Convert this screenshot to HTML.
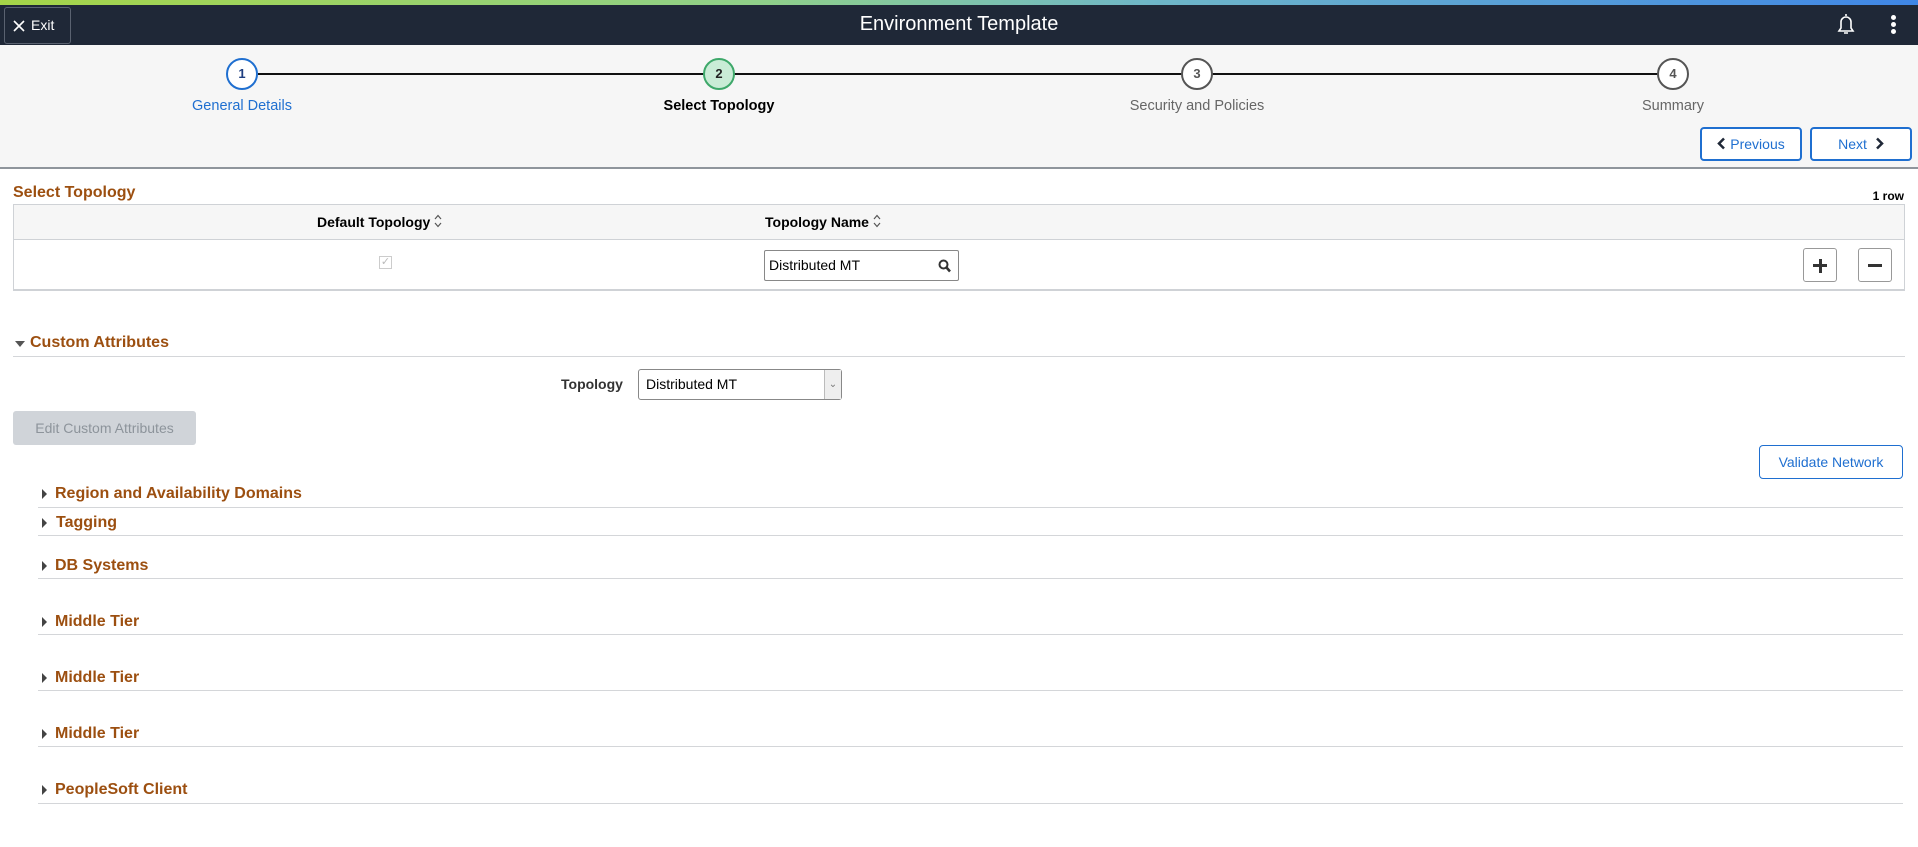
<!DOCTYPE html>
<html><head><meta charset="utf-8"><style>
*{box-sizing:border-box;margin:0;padding:0}
body{width:1918px;height:847px;background:#fff;font-family:"Liberation Sans",Arial,sans-serif;position:relative;overflow:hidden;color:#333}
.a{position:absolute}
.top{left:0;top:0;width:1918px;height:5px;background:linear-gradient(90deg,#a5d548,#8fd08a 40%,#6fb7c8 60%,#3f86e6)}
.hdr{left:0;top:5px;width:1918px;height:40px;background:#1f2837}
.exit{left:4px;top:7px;width:67px;height:37px;border:1px solid #5a6270;border-radius:3px;color:#fff;font-size:14px;line-height:35px;padding-left:26px}
.title{left:0;width:1918px;top:13px;text-align:center;color:#fff;font-size:20px}
.step{background:#f6f6f6;left:0;top:45px;width:1918px;height:124px;border-bottom:2px solid #8f959c}
.line{top:73px;height:2px;background:#111}
.circ{width:32px;height:32px;border-radius:50%;border:2px solid #555;background:#fff;text-align:center;line-height:28px;font-size:13px;font-weight:bold;color:#555;top:58px}
.lbl{top:98px;font-size:14.5px;text-align:center;width:240px}
.btn{border:2px solid #1f6fd0;border-radius:4px;background:#fff;color:#1f6fd0;font-size:14px;text-align:center}
.sec{color:#9c4f10;font-weight:bold;font-size:16px}
.hl{height:1px;background:#d4d6d9}
.sort{display:inline-block;vertical-align:-1px;margin-left:3px}
</style></head><body>
<div class="a top"></div>
<div class="a hdr"></div>
<div class="a exit"><svg class="a" style="left:8px;top:12px" width="12" height="12" viewBox="0 0 12 12"><path d="M1 1L11 11M11 1L1 11" stroke="#fff" stroke-width="1.6"/></svg>Exit</div>
<div class="a title">Environment Template</div>
<svg class="a" style="left:1836px;top:12px" width="20" height="24" viewBox="0 0 20 24"><path d="M10 2v2M5 16V10a5 5 0 0 1 10 0v6l2 3H3z M8 21h4" stroke="#fff" stroke-width="1.6" fill="none"/></svg>
<div class="a" style="left:1891px;top:15px;width:5px;height:5px;border-radius:50%;background:#fff"></div>
<div class="a" style="left:1891px;top:22px;width:5px;height:5px;border-radius:50%;background:#fff"></div>
<div class="a" style="left:1891px;top:29px;width:5px;height:5px;border-radius:50%;background:#fff"></div>

<div class="a step"></div>
<div class="a line" style="left:258px;width:1400px"></div>
<div class="a circ" style="left:226px;border-color:#1f6fd0;color:#1f3f80">1</div>
<div class="a circ" style="left:703px;border-color:#3ea86a;background:#c9ecd6;color:#222">2</div>
<div class="a circ" style="left:1181px">3</div>
<div class="a circ" style="left:1657px">4</div>
<div class="a lbl" style="left:122px;color:#1f6fd0">General Details</div>
<div class="a lbl" style="left:599px;color:#000;font-weight:bold">Select Topology</div>
<div class="a lbl" style="left:1077px;color:#666">Security and Policies</div>
<div class="a lbl" style="left:1553px;color:#666">Summary</div>
<div class="a btn" style="left:1700px;top:127px;width:102px;height:34px;line-height:30px"><svg width="9" height="13" viewBox="0 0 9 13" style="vertical-align:-1px;margin-right:4px"><path d="M7 1.5L2 6.5l5 5" stroke="#1f2837" stroke-width="2.5" fill="none"/></svg>Previous</div>
<div class="a btn" style="left:1810px;top:127px;width:102px;height:34px;line-height:30px">Next<svg width="9" height="13" viewBox="0 0 9 13" style="vertical-align:-1px;margin-left:8px"><path d="M2 1.5l5 5-5 5" stroke="#1f2837" stroke-width="2.5" fill="none"/></svg></div>

<div class="a sec" style="left:13px;top:184px">Select Topology</div>
<div class="a" style="right:14px;top:189px;font-size:12px;font-weight:bold;color:#000">1 row</div>
<div class="a" style="left:13px;top:204px;width:1892px;height:87px;border:1px solid #cfd2d6;border-bottom:2px solid #cfd2d6"></div>
<div class="a" style="left:14px;top:205px;width:1890px;height:35px;background:#f6f6f6;border-bottom:1px solid #cfd2d6"></div>
<div class="a" style="left:317px;top:214px;font-size:14px;font-weight:bold;color:#000">Default Topology<svg class="sort" width="10" height="14" viewBox="0 0 10 14"><path d="M2 5l3-3.5L8 5M2 9l3 3.5L8 9" stroke="#555" stroke-width="1.2" fill="none"/></svg></div>
<div class="a" style="left:765px;top:214px;font-size:14px;font-weight:bold;color:#000">Topology Name<svg class="sort" width="10" height="14" viewBox="0 0 10 14"><path d="M2 5l3-3.5L8 5M2 9l3 3.5L8 9" stroke="#555" stroke-width="1.2" fill="none"/></svg></div>
<div class="a" style="left:379px;top:256px;width:13px;height:13px;border:1px solid #ccc;color:#bbb;font-size:11px;line-height:11px;text-align:center">&#10003;</div>
<div class="a" style="left:764px;top:250px;width:195px;height:31px;border:1px solid #888;border-radius:2px;font-size:14px;line-height:29px;padding-left:4px;color:#000">Distributed MT
<svg class="a" style="right:7px;top:8px" width="13" height="14" viewBox="0 0 13 14"><circle cx="5.5" cy="5.5" r="4" stroke="#333" stroke-width="2" fill="none"/><path d="M8.5 8.5l3.5 4" stroke="#333" stroke-width="2.5"/></svg></div>
<div class="a" style="left:1803px;top:248px;width:34px;height:34px;border:1px solid #999;border-radius:3px"><div class="a" style="left:9px;top:15px;width:14px;height:3px;background:#333"></div><div class="a" style="left:14.5px;top:9.5px;width:3px;height:14px;background:#333"></div></div>
<div class="a" style="left:1858px;top:248px;width:34px;height:34px;border:1px solid #999;border-radius:3px"><div class="a" style="left:9px;top:15px;width:14px;height:3px;background:#333"></div></div>

<div class="a" style="left:15px;top:341px;width:0;height:0;border-left:5px solid transparent;border-right:5px solid transparent;border-top:6px solid #555"></div>
<div class="a sec" style="left:30px;top:334px">Custom Attributes</div>
<div class="a hl" style="left:13px;top:356px;width:1892px"></div>
<div class="a" style="left:561px;top:376px;font-size:14px;font-weight:bold;color:#333">Topology</div>
<div class="a" style="left:638px;top:369px;width:204px;height:31px;border:1px solid #888;border-radius:3px;font-size:14px;line-height:29px;padding-left:7px;color:#000">Distributed MT<div class="a" style="right:0;top:0;width:17px;height:29px;background:#eee;border-left:1px solid #bbb;font-size:10px;color:#777;text-align:center">&#8964;</div></div>
<div class="a" style="left:13px;top:411px;width:183px;height:34px;background:#d0d4d9;border-radius:3px;color:#8d949b;font-size:14px;line-height:34px;text-align:center">Edit Custom Attributes</div>
<div class="a" style="left:1759px;top:445px;width:144px;height:34px;border:1px solid #1f6fd0;border-radius:4px;color:#1f6fd0;font-size:14px;line-height:32px;text-align:center">Validate Network</div>

<div class="a hl" style="left:38px;top:507px;width:1865px"></div>
<div class="a hl" style="left:38px;top:535px;width:1865px"></div>
<div class="a hl" style="left:38px;top:578px;width:1865px"></div>
<div class="a hl" style="left:38px;top:634px;width:1865px"></div>
<div class="a hl" style="left:38px;top:690px;width:1865px"></div>
<div class="a hl" style="left:38px;top:746px;width:1865px"></div>
<div class="a hl" style="left:38px;top:803px;width:1865px"></div>
<div class="a" style="left:42px;top:0">
<div class="a" style="top:489px;border-top:5px solid transparent;border-bottom:5px solid transparent;border-left:5px solid #444"></div>
<div class="a" style="top:518px;border-top:5px solid transparent;border-bottom:5px solid transparent;border-left:5px solid #444"></div>
<div class="a" style="top:561px;border-top:5px solid transparent;border-bottom:5px solid transparent;border-left:5px solid #444"></div>
<div class="a" style="top:617px;border-top:5px solid transparent;border-bottom:5px solid transparent;border-left:5px solid #444"></div>
<div class="a" style="top:673px;border-top:5px solid transparent;border-bottom:5px solid transparent;border-left:5px solid #444"></div>
<div class="a" style="top:729px;border-top:5px solid transparent;border-bottom:5px solid transparent;border-left:5px solid #444"></div>
<div class="a" style="top:785px;border-top:5px solid transparent;border-bottom:5px solid transparent;border-left:5px solid #444"></div>
</div>
<div class="a sec" style="left:55px;top:485px">Region and Availability Domains</div>
<div class="a sec" style="left:56px;top:514px">Tagging</div>
<div class="a sec" style="left:55px;top:557px">DB Systems</div>
<div class="a sec" style="left:55px;top:613px">Middle Tier</div>
<div class="a sec" style="left:55px;top:669px">Middle Tier</div>
<div class="a sec" style="left:55px;top:725px">Middle Tier</div>
<div class="a sec" style="left:55px;top:781px">PeopleSoft Client</div>
</body></html>
